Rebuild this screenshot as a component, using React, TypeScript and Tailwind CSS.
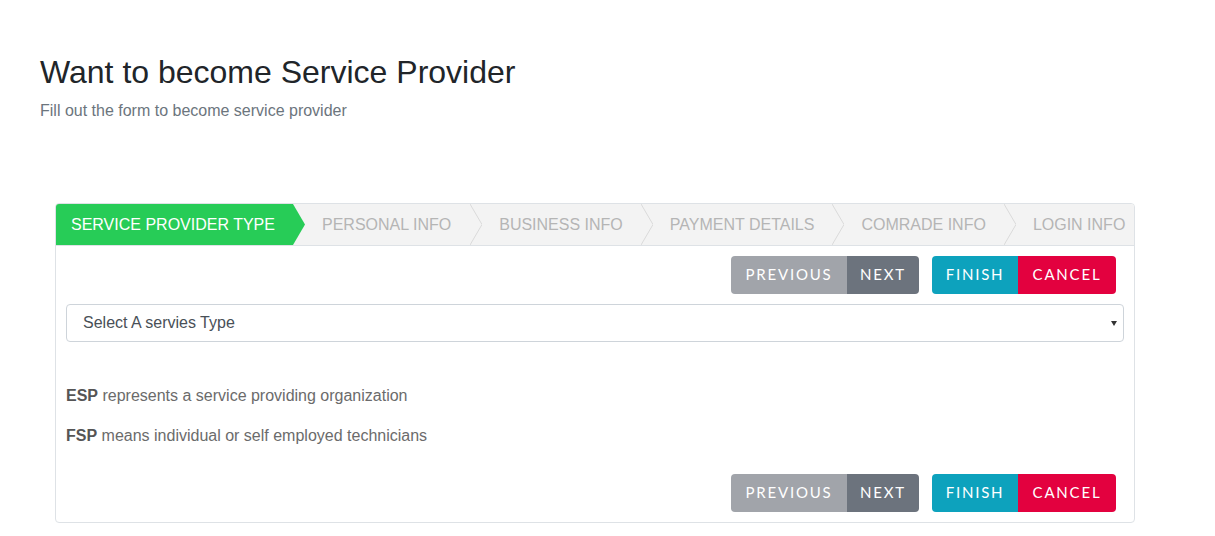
import React from 'react';

const steps = ['PERSONAL INFO', 'BUSINESS INFO', 'PAYMENT DETAILS', 'COMRADE INFO', 'LOGIN INFO'];

const Chevron = () => (
  <svg width="12" height="41" viewBox="0 0 12 41" className="shrink-0">
    <polyline points="0,0 12,20.5 0,41" fill="none" stroke="#dadada" strokeWidth="1" />
  </svg>
);

const ActionButtons = () => (
  <div className="flex justify-end gap-[13px] pr-[8px] font-['Lato','Open_Sans',sans-serif] text-[15px] leading-none tracking-[0.12em] text-white">
    <div className="flex h-[38px] overflow-hidden rounded">
      <button className="w-[116px] bg-[#a1a4aa] pb-[2px]">PREVIOUS</button>
      <button className="w-[72px] bg-[#6c737d] pb-[2px]">NEXT</button>
    </div>
    <div className="flex h-[38px] overflow-hidden rounded">
      <button className="w-[86px] bg-[#0da2bd] pb-[2px]">FINISH</button>
      <button className="w-[98px] bg-[#e3013f] pb-[2px]">CANCEL</button>
    </div>
  </div>
);

const App = () => {
  return (
    <main className="min-h-screen bg-white font-['Liberation_Sans',Arial,sans-serif]">
      {/* Heading */}
      <div className="pl-10 pt-[53px]">
        <h1 className="text-[32px] leading-[1.2] text-[#212529]">Want to become Service Provider</h1>
        <p className="mt-[8px] text-base leading-6 text-[#6c757d]">Fill out the form to become service provider</p>
      </div>

      {/* Wizard card */}
      <div className="ml-[55px] mt-[80px] w-[1080px] overflow-hidden rounded border border-[#dee2e6]">
        <div className="flex h-[42px] items-stretch overflow-hidden border-b border-[#dee2e6] bg-[#f3f3f3] text-base">
          <div className="flex w-[237px] shrink-0 items-center bg-[#27cc57] pl-[15px] text-white">SERVICE PROVIDER TYPE</div>
          <svg width="12" height="41" viewBox="0 0 12 41" className="shrink-0">
            <polygon points="0,0 12,20.5 0,41" fill="#27cc57" />
          </svg>
          {steps.map((s, i) => (
            <React.Fragment key={s}>
              <div
                className={
                  i === 0
                    ? 'flex shrink-0 items-center whitespace-nowrap pl-[17px] pr-[19px] text-[#b5b5b5]'
                    : 'flex shrink-0 items-center whitespace-nowrap pl-[17px] pr-[18px] text-[#b5b5b5]'
                }
              >
                {s}
              </div>
              {i < steps.length - 1 && <Chevron />}
            </React.Fragment>
          ))}
        </div>

        <div className="px-[10px] pb-[10px] pt-[10px]">
          <ActionButtons />

          <div className="mt-[10px] flex h-[38px] items-center justify-between rounded border border-[#ced4da] pl-4 pr-[6px] text-base text-[#495057]">
            <span>Select A servies Type</span>
            <svg width="6" height="5" viewBox="0 0 6 5">
              <polygon points="0,0 6,0 3,5" fill="#333" />
            </svg>
          </div>

          <p className="mt-[42px] text-base leading-6 text-[#6b6b6b]">
            <b className="text-[#555]">ESP</b> represents a service providing organization
          </p>
          <p className="mt-4 text-base leading-6 text-[#6b6b6b]">
            <b className="text-[#555]">FSP</b> means individual or self employed technicians
          </p>

          <div className="mt-[26px]">
            <ActionButtons />
          </div>
        </div>
      </div>
    </main>
  );
};

export default App;
